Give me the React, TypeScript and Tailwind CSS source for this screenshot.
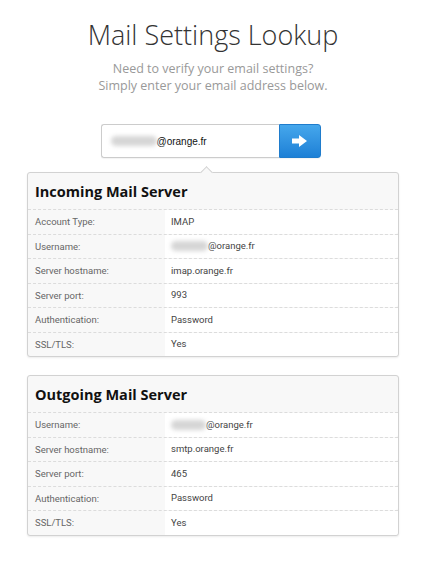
type Row = {
    label: string
    value: string
    blur?: number
}

const incoming: Row[] = [
    { label: "Account Type:", value: "IMAP" },
    { label: "Username:", value: "@orange.fr", blur: 37 },
    { label: "Server hostname:", value: "imap.orange.fr" },
    { label: "Server port:", value: "993" },
    { label: "Authentication:", value: "Password" },
    { label: "SSL/TLS:", value: "Yes" },
]

const outgoing: Row[] = [
    { label: "Username:", value: "@orange.fr", blur: 35 },
    { label: "Server hostname:", value: "smtp.orange.fr" },
    { label: "Server port:", value: "465" },
    { label: "Authentication:", value: "Password" },
    { label: "SSL/TLS:", value: "Yes" },
]

function Blurred({ width }: { width: number }) {
    return (
        <span
            className="inline-block h-[10px] rounded-full bg-[#d6d6d6] blur-[2px] align-middle"
            style={{ width }}
        />
    )
}

function Panel({ title, rows, caret }: { title: string; rows: Row[]; caret?: boolean }) {
    return (
        <div className="relative rounded-[3px] border border-[#d2d2d2] bg-[#f8f8f8] shadow-[0_1px_2px_rgba(0,0,0,0.08)]">
            {caret && (
                <div className="absolute -top-[5px] left-[174px] h-[9px] w-[9px] rotate-45 border-l border-t border-[#d2d2d2] bg-[#f8f8f8]" />
            )}
            <h2 className="relative h-[36px] px-[7px] pt-[9px] text-[14.5px] font-bold text-[#111] leading-[20px]">
                {title}
            </h2>
            {rows.map((r) => (
                <div key={r.label} className="flex h-[24.5px] border-t border-dashed border-[#dcdcdc] font-['Roboto',sans-serif] text-[9.5px] leading-[24px]">
                    <div className="w-[137px] shrink-0 pl-[7px] text-[#666]">{r.label}</div>
                    <div className="flex flex-1 items-center rounded-br-[3px] bg-white pl-[6px] text-[#444]">
                        {r.blur && <Blurred width={r.blur} />}
                        <span>{r.value}</span>
                    </div>
                </div>
            ))}
        </div>
    )
}

export default function App() {
    return (
        <div className="min-h-[562px] bg-white font-['Open_Sans',sans-serif]">
            <div className="pt-[19px] text-center">
                <h1 className="text-[27px] font-light leading-[32px] text-[#333]">Mail Settings Lookup</h1>
                <p className="mt-[9px] text-[12.5px] leading-[17px] text-[#999]">
                    Need to verify your email settings?
                    <br />
                    Simply enter your email address below.
                </p>
            </div>

            <div className="mt-[30px] flex justify-center">
                <div className="ml-[-5px] flex h-[34px] w-[220px] rounded-[3px] shadow-[0_1px_1px_rgba(0,0,0,0.05)]">
                    <div className="flex flex-1 items-center rounded-l-[3px] border border-r-0 border-[#ccc] bg-white pl-[9px] font-['Liberation_Sans',sans-serif] text-[10px] text-[#111]">
                        <Blurred width={46} />
                        <span>@orange.fr</span>
                    </div>
                    <button className="flex w-[42px] items-center justify-center rounded-r-[3px] border border-[#1f7ccc] bg-gradient-to-b from-[#45a7ec] to-[#1d80d6]">
                        <svg width="15" height="12" viewBox="0 0 15 12">
                            <polygon points="0,3.5 7,3.5 7,0 15,6 7,12 7,8.5 0,8.5" fill="white" />
                        </svg>
                    </button>
                </div>
            </div>

            <div className="mx-[27px] mt-[14px] flex flex-col gap-[18px] pb-[26px]">
                <Panel title="Incoming Mail Server" rows={incoming} caret />
                <Panel title="Outgoing Mail Server" rows={outgoing} />
            </div>
        </div>
    )
}
